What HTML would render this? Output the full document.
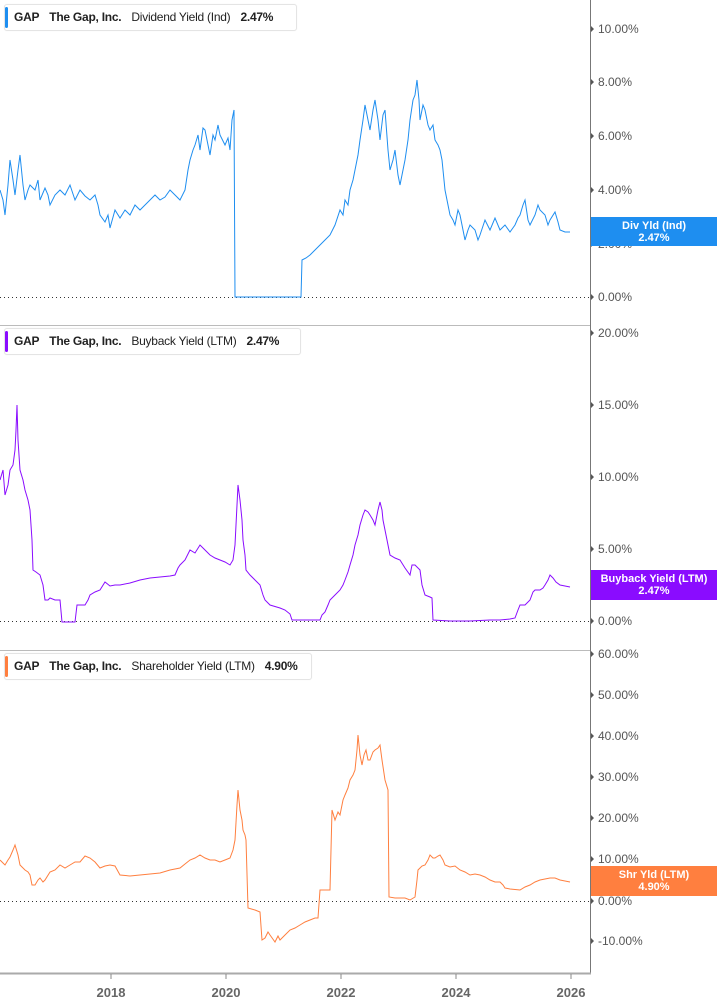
<!DOCTYPE html>
<html><head><meta charset="utf-8"><style>
body{margin:0;width:717px;height:1005px;background:#fff;font-family:"Liberation Sans",sans-serif;overflow:hidden;position:relative}
.hdr{position:absolute;left:4px;height:25px;background:#fff;border:1px solid #e4e4e4;border-radius:3px;font-size:12px;font-weight:bold;color:#222;line-height:25px;padding-left:9px;white-space:nowrap;box-shadow:0 0 1px #eee;letter-spacing:-0.25px}
.hdr i{position:absolute;left:0;top:2px;bottom:2px;width:3px;border-radius:2px}
.hdr span{margin-right:10px}
.hdr .n{font-weight:normal}
.lab{position:absolute;left:598px;font-size:12px;color:#555}
.box{position:absolute;left:591px;width:126px;color:#fff;font-size:11px;font-weight:bold;text-align:center;line-height:12px;padding-top:3px}
.yr{position:absolute;top:985px;font-size:13px;font-weight:bold;color:#666;width:50px;text-align:center}
</style></head><body>
<svg width="717" height="1005" style="position:absolute;left:0;top:0">
<g stroke="#bbb" stroke-width="1"><line x1="0" y1="325.5" x2="590" y2="325.5"/><line x1="0" y1="650.5" x2="590" y2="650.5"/></g>
<line x1="590.5" y1="0" x2="590.5" y2="973" stroke="#777"/>
<line x1="0" y1="973.5" x2="591" y2="973.5" stroke="#aaa" stroke-width="2"/>
<g stroke="#888"><line x1="111" y1="974" x2="111" y2="979"/><line x1="226" y1="974" x2="226" y2="979"/><line x1="341" y1="974" x2="341" y2="979"/><line x1="456" y1="974" x2="456" y2="979"/><line x1="571" y1="974" x2="571" y2="979"/></g>
<g stroke="#333" stroke-dasharray="1,3"><line x1="0" y1="297.5" x2="590" y2="297.5"/><line x1="0" y1="621.5" x2="590" y2="621.5"/><line x1="0" y1="901.5" x2="590" y2="901.5"/></g>
<g fill="#555">
<path d="M591 26v6l3-3z M591 79v6l3-3z M591 133v6l3-3z M591 187v6l3-3z M591 241v6l3-3z M591 294v6l3-3z"/>
<path d="M591 330v6l3-3z M591 402v6l3-3z M591 474v6l3-3z M591 546v6l3-3z M591 618v6l3-3z"/>
<path d="M591 651v6l3-3z M591 692v6l3-3z M591 733v6l3-3z M591 774v6l3-3z M591 815v6l3-3z M591 856v6l3-3z M591 898v6l3-3z M591 938v6l3-3z"/>
</g>
<polyline fill="none" stroke="#1e8ef0" stroke-width="1" points="0,190 3,200 5,215 8,185 10,160 13,180 15,195 18,170 20,155 23,185 25,200 28,190 30,185 35,190 38,180 40,200 45,188 48,195 50,205 55,195 60,190 65,195 70,185 75,200 80,190 85,196 90,200 95,195 98,205 100,215 105,222 108,215 110,228 115,210 120,218 125,210 130,215 135,205 140,210 145,205 150,200 155,195 160,200 165,197 170,190 175,195 180,200 185,190 188,170 190,160 193,150 195,145 198,135 200,150 203,128 205,130 208,145 210,155 213,135 215,140 218,125 220,135 225,145 228,138 230,150 232,120 233,115 234,110 235,297 301,297 302,260 306,258 310,255 315,250 320,245 325,240 330,235 335,225 340,210 343,215 345,200 348,205 350,190 353,180 355,170 358,155 360,140 363,120 365,105 368,120 370,130 373,110 375,100 378,120 380,140 383,115 385,110 388,150 390,170 393,160 395,150 398,175 400,185 403,170 405,160 408,140 410,120 413,100 415,95 417,80 419,100 420,120 423,105 425,110 428,125 430,130 433,125 435,140 438,145 440,150 442,160 445,190 448,205 450,215 453,220 455,225 458,210 460,215 463,230 465,240 468,230 470,225 475,230 478,240 480,235 485,220 490,230 495,218 500,230 505,225 510,232 515,225 518,218 520,215 523,205 525,200 528,220 530,225 535,215 538,205 540,210 545,215 548,225 550,220 555,212 558,222 560,230 565,232 570,232"/>
<polyline fill="none" stroke="#8a0cff" stroke-width="1" points="0,480 3,470 5,495 8,485 10,470 13,465 15,450 16,430 17,405 18,440 20,470 23,480 25,490 28,500 30,510 32,540 33,570 36,572 40,575 43,585 45,600 48,600 50,598 55,600 60,600 62,622 75,622 77,605 85,605 88,600 90,595 95,592 100,590 105,582 110,586 115,585 120,585 130,583 140,580 150,578 160,577 170,576 175,575 178,568 180,565 185,560 190,550 195,553 200,545 205,550 210,555 215,558 220,560 225,562 230,565 233,560 235,545 237,505 238,485 240,500 242,520 243,540 245,555 246,570 250,575 255,580 260,585 263,595 265,600 270,605 280,608 285,610 290,614 292,620 320,620 322,615 325,612 328,605 330,600 335,595 340,590 343,585 345,580 348,572 350,565 353,555 355,545 358,535 360,525 363,515 365,510 368,512 370,515 373,520 375,525 378,510 380,502 382,510 383,520 386,535 388,545 390,555 395,558 400,560 405,568 410,575 412,565 415,565 418,568 420,570 422,585 425,595 430,597 432,598 433,620 450,621 470,621 490,620 500,620 510,619 515,618 518,610 520,605 525,605 528,602 530,600 533,592 535,590 540,590 543,588 545,585 548,580 550,575 553,578 556,582 560,585 565,586 570,587"/>
<polyline fill="none" stroke="#ff7f3f" stroke-width="1" points="0,860 3,863 5,865 8,860 10,857 13,850 15,845 18,855 20,865 25,870 28,872 30,875 32,885 35,885 38,880 40,878 43,882 45,880 50,872 55,870 60,865 65,868 70,865 75,862 80,862 85,856 90,858 95,862 100,868 105,866 110,865 115,866 120,875 130,876 140,875 150,874 160,873 170,870 180,868 185,864 190,860 195,858 200,855 205,858 210,860 215,860 220,862 225,860 230,858 233,850 235,840 237,805 238,790 239,800 240,810 242,820 243,830 245,835 246,840 248,908 255,910 260,912 262,940 265,938 268,932 270,935 275,942 278,936 280,940 285,935 290,930 295,928 300,925 305,922 310,920 315,918 318,918 320,890 325,890 330,890 332,810 335,820 338,812 340,815 343,800 345,795 348,788 350,780 353,775 355,770 357,750 358,735 360,755 362,765 364,755 366,750 368,760 370,760 373,752 375,750 378,748 380,745 382,760 385,780 388,790 389,897 395,898 405,898 410,900 415,897 417,880 418,870 420,868 422,866 425,865 428,860 430,855 433,858 435,858 438,856 440,855 443,860 445,865 450,867 455,866 460,870 465,872 470,875 475,874 480,875 485,877 490,880 495,882 500,882 503,885 505,888 510,889 520,890 525,887 530,885 535,882 540,880 545,879 550,878 555,878 560,880 565,881 570,882"/>
</svg>
<div class="lab" style="top:22px">10.00%</div>
<div class="lab" style="top:75px">8.00%</div>
<div class="lab" style="top:129px">6.00%</div>
<div class="lab" style="top:183px">4.00%</div>
<div class="lab" style="top:237px">2.00%</div>
<div class="lab" style="top:290px">0.00%</div>
<div class="lab" style="top:326px">20.00%</div>
<div class="lab" style="top:398px">15.00%</div>
<div class="lab" style="top:470px">10.00%</div>
<div class="lab" style="top:542px">5.00%</div>
<div class="lab" style="top:614px">0.00%</div>
<div class="lab" style="top:647px">60.00%</div>
<div class="lab" style="top:688px">50.00%</div>
<div class="lab" style="top:729px">40.00%</div>
<div class="lab" style="top:770px">30.00%</div>
<div class="lab" style="top:811px">20.00%</div>
<div class="lab" style="top:852px">10.00%</div>
<div class="lab" style="top:894px">0.00%</div>
<div class="lab" style="top:934px">-10.00%</div>
<div class="box" style="top:217px;height:26px;background:#1e8ef0">Div Yld (Ind)<br>2.47%</div>
<div class="box" style="top:570px;height:27px;background:#8a0cff">Buyback Yield (LTM)<br>2.47%</div>
<div class="box" style="top:866px;height:27px;background:#ff7f3f">Shr Yld (LTM)<br>4.90%</div>
<div class="hdr" style="top:4px;width:282px"><i style="background:#1e8ef0"></i><span>GAP</span><span>The Gap, Inc.</span><span class="n">Dividend Yield (Ind)</span><span>2.47%</span></div>
<div class="hdr" style="top:328px;width:286px"><i style="background:#8a0cff"></i><span>GAP</span><span>The Gap, Inc.</span><span class="n">Buyback Yield (LTM)</span><span>2.47%</span></div>
<div class="hdr" style="top:653px;width:297px"><i style="background:#ff7f3f"></i><span>GAP</span><span>The Gap, Inc.</span><span class="n">Shareholder Yield (LTM)</span><span>4.90%</span></div>
<div class="yr" style="left:86px">2018</div>
<div class="yr" style="left:201px">2020</div>
<div class="yr" style="left:316px">2022</div>
<div class="yr" style="left:431px">2024</div>
<div class="yr" style="left:546px">2026</div>
</body></html>
